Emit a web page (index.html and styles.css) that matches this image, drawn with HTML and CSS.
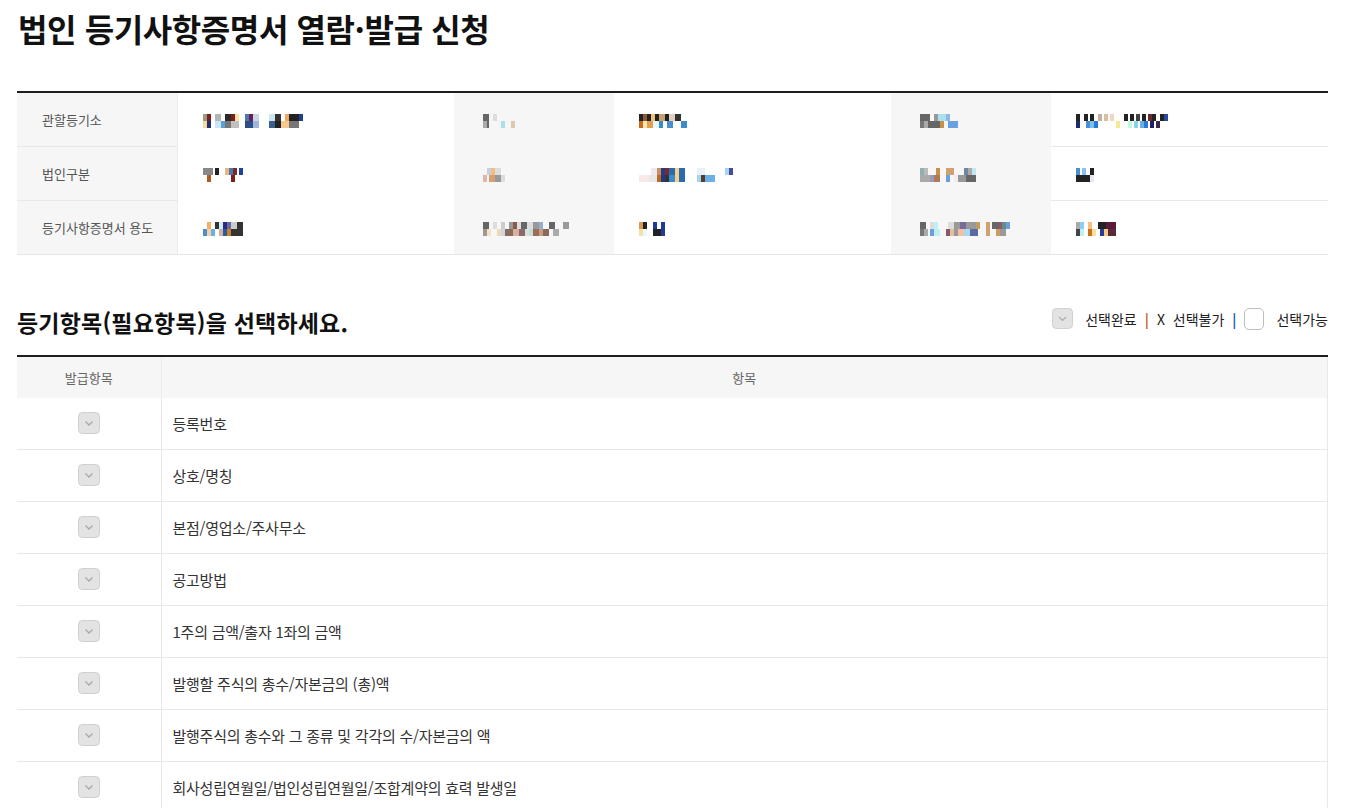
FILE: index.html
```html
<!DOCTYPE html>
<html lang="ko">
<head>
    <meta charset="UTF-8">
    <meta name="viewport" content="width=device-width, initial-scale=1.0">
    <title>법인 등기사항증명서 열람·발급 신청</title>
    <link rel="stylesheet" href="styles.css">
</head>
<body>
    <h1 class="page-title">법인 등기사항증명서 열람·발급 신청</h1>

    <table class="info">
        <colgroup>
            <col class="w-label"><col class="w-value">
            <col class="w-label"><col class="w-value">
            <col class="w-label"><col class="w-value">
        </colgroup>
        <tr>
            <th class="lined">관할등기소</th>
            <td><span class="mz mz-a1"></span></td>
            <th><span class="mz mz-b1"></span></th>
            <td><span class="mz mz-c1"></span></td>
            <th><span class="mz mz-d1"></span></th>
            <td class="lined"><span class="mz mz-e1"></span></td>
        </tr>
        <tr>
            <th class="lined">법인구분</th>
            <td><span class="mz mz-a2"></span></td>
            <th><span class="mz mz-b2"></span></th>
            <td><span class="mz mz-c2"></span></td>
            <th><span class="mz mz-d2"></span></th>
            <td class="lined"><span class="mz mz-e2"></span></td>
        </tr>
        <tr class="last">
            <th>등기사항증명서 용도</th>
            <td><span class="mz mz-a3"></span></td>
            <th><span class="mz mz-b3"></span></th>
            <td><span class="mz mz-c3"></span></td>
            <th><span class="mz mz-d3"></span></th>
            <td><span class="mz mz-e3"></span></td>
        </tr>
    </table>

    <div class="section-head">
        <h2>등기항목(필요항목)을 선택하세요.</h2>
        <div class="legend">
            <svg class="chk" width="21" height="21" viewBox="0 0 22 22"><rect x="0.5" y="0.5" width="21" height="21" rx="4" fill="#e3e3e3" stroke="#cfcfcf"/><polyline points="7.5,9.5 11,13 14.5,9.5" fill="none" stroke="#a8a8a8" stroke-width="1.3"/></svg>
            <span class="lg-text">선택완료</span>
            <span class="bar bar-done">|</span>
            <span class="lg-text">X&nbsp; 선택불가</span>
            <span class="bar bar-no">|</span>
            <span class="empty-box"></span>
            <span class="lg-text">선택가능</span>
        </div>
    </div>

    <table class="items">
        <colgroup><col class="w-check"><col></colgroup>
        <thead>
            <tr><th>발급항목</th><th>항목</th></tr>
        </thead>
        <tbody>
            <tr><td class="c"><svg class="chk" width="22" height="22" viewBox="0 0 22 22"><rect x="0.5" y="0.5" width="21" height="21" rx="4" fill="#e3e3e3" stroke="#cfcfcf"/><polyline points="7.5,9.5 11,13 14.5,9.5" fill="none" stroke="#a8a8a8" stroke-width="1.3"/></svg></td><td>등록번호</td></tr>
            <tr><td class="c"><svg class="chk" width="22" height="22" viewBox="0 0 22 22"><rect x="0.5" y="0.5" width="21" height="21" rx="4" fill="#e3e3e3" stroke="#cfcfcf"/><polyline points="7.5,9.5 11,13 14.5,9.5" fill="none" stroke="#a8a8a8" stroke-width="1.3"/></svg></td><td>상호/명칭</td></tr>
            <tr><td class="c"><svg class="chk" width="22" height="22" viewBox="0 0 22 22"><rect x="0.5" y="0.5" width="21" height="21" rx="4" fill="#e3e3e3" stroke="#cfcfcf"/><polyline points="7.5,9.5 11,13 14.5,9.5" fill="none" stroke="#a8a8a8" stroke-width="1.3"/></svg></td><td>본점/영업소/주사무소</td></tr>
            <tr><td class="c"><svg class="chk" width="22" height="22" viewBox="0 0 22 22"><rect x="0.5" y="0.5" width="21" height="21" rx="4" fill="#e3e3e3" stroke="#cfcfcf"/><polyline points="7.5,9.5 11,13 14.5,9.5" fill="none" stroke="#a8a8a8" stroke-width="1.3"/></svg></td><td>공고방법</td></tr>
            <tr><td class="c"><svg class="chk" width="22" height="22" viewBox="0 0 22 22"><rect x="0.5" y="0.5" width="21" height="21" rx="4" fill="#e3e3e3" stroke="#cfcfcf"/><polyline points="7.5,9.5 11,13 14.5,9.5" fill="none" stroke="#a8a8a8" stroke-width="1.3"/></svg></td><td>1주의 금액/출자 1좌의 금액</td></tr>
            <tr><td class="c"><svg class="chk" width="22" height="22" viewBox="0 0 22 22"><rect x="0.5" y="0.5" width="21" height="21" rx="4" fill="#e3e3e3" stroke="#cfcfcf"/><polyline points="7.5,9.5 11,13 14.5,9.5" fill="none" stroke="#a8a8a8" stroke-width="1.3"/></svg></td><td>발행할 주식의 총수/자본금의 (총)액</td></tr>
            <tr><td class="c"><svg class="chk" width="22" height="22" viewBox="0 0 22 22"><rect x="0.5" y="0.5" width="21" height="21" rx="4" fill="#e3e3e3" stroke="#cfcfcf"/><polyline points="7.5,9.5 11,13 14.5,9.5" fill="none" stroke="#a8a8a8" stroke-width="1.3"/></svg></td><td>발행주식의 총수와 그 종류 및 각각의 수/자본금의 액</td></tr>
            <tr><td class="c"><svg class="chk" width="22" height="22" viewBox="0 0 22 22"><rect x="0.5" y="0.5" width="21" height="21" rx="4" fill="#e3e3e3" stroke="#cfcfcf"/><polyline points="7.5,9.5 11,13 14.5,9.5" fill="none" stroke="#a8a8a8" stroke-width="1.3"/></svg></td><td>회사성립연월일/법인성립연월일/조합계약의 효력 발생일</td></tr>
        </tbody>
    </table>
</body>
</html>
```

FILE: styles.css
```css
*{
    margin: 0;
    padding: 0;
    box-sizing: border-box;
}
body{
    padding: 0 27px 0 17px;
    font-family: "Noto Sans CJK KR", "Noto Sans", sans-serif;
    color: #222;
    background-color: #fff;
}
.page-title{
    padding-top: 8px;
    padding-left: 1px;
    font-size: 32px;
    line-height: 40px;
    font-weight: 700;
    color: #111;
    letter-spacing: -0.4px;
}

/* info table */
.info{
    width: 100%;
    margin-top: 43px;
    border-collapse: collapse;
    border-top: 2px solid #1e1e1e;
    border-bottom: 1px solid #e6e6e6;
    table-layout: fixed;
}
.w-label{ width: 160px; }
.info th, .info td{
    height: 54px;
    padding: 0 10px 0 25px;
    text-align: left;
    vertical-align: middle;
    font-size: 13px;
    font-weight: 400;
    white-space: nowrap;
}
.info th{
    background-color: #f6f6f6;
    color: #555;
}
.info th:first-child{
    border-right: 1px solid #ececec;
}
.info td{
    background-color: #fff;
}
.info .lined{
    border-bottom: 1px solid #e8e8e8;
}
.info th:nth-child(3), .info th:nth-child(5){
    padding-left: 29px;
}

/* mosaic placeholders for masked values */
.mz{
    display: inline-block;
    height: 14px;
    vertical-align: middle;
    background-repeat: no-repeat;
    background-size: 100% 50%;
    background-position: top, bottom;
}
.mz-a1{ width: 130px;
    background-image:
        linear-gradient(90deg, #9a9a80 0 4px, #7a1e1e 4px 8px, #fff 8px 12px, #b5b5b5 12px 18px, #fff 18px 22px, #2a2a2a 22px 28px, #7a1e1e 28px 32px, #ffe4a0 32px 36px, #fff 36px 42px, #4a7ab0 42px 46px, #6b1f4a 46px 50px, #c9d6ea 50px 56px, #fff 56px 66px, #cde6ea 66px 72px, #333 72px 78px, #fff 78px 82px, #f3a860 82px 86px, #222 86px 96px, #1f3f8f 96px 100px, #fff 100px 130px),
        linear-gradient(90deg, #f8d89a 0 4px, #1f3070 4px 8px, #fff 8px 12px, #c8e6f5 12px 18px, #5aa0d0 18px 22px, #777 22px 28px, #c0c0c0 28px 36px, #fff 36px 42px, #2e4c86 42px 50px, #a0b4e0 50px 56px, #fff 56px 66px, #3a5e8e 66px 72px, #222 72px 78px, #f7c890 78px 86px, #777 86px 96px, #fff 96px 130px);
}
.mz-a2{ width: 50px;
    background-image:
        linear-gradient(90deg, #888 0 10px, #fff 10px 12px, #222 12px 16px, #fff 16px 22px, #e4b880 22px 26px, #4a78b0 26px 30px, #7a2a2a 30px 34px, #fff 34px 36px, #2040a0 36px 40px, #fff 40px 50px),
        linear-gradient(90deg, #fff 0 4px, #b05a20 4px 8px, #fff 8px 28px, #7a1e1e 28px 32px, #fff 32px 50px);
}
.mz-a3{ width: 60px;
    background-image:
        linear-gradient(90deg, #fff 0 4px, #f3b060 4px 8px, #fff 8px 12px, #333 12px 16px, #d0ecf5 16px 20px, #2a2a8a 20px 24px, #6a6a9a 24px 28px, #ccc 28px 34px, #333 34px 40px, #fff 40px 60px),
        linear-gradient(90deg, #4a90d0 0 4px, #f8d0a0 4px 8px, #6ab0e8 8px 12px, #fff 12px 16px, #d0b0a0 16px 20px, #2a5aa0 20px 24px, #c8802a 24px 28px, #333 28px 40px, #fff 40px 60px);
}
.mz-b1{ width: 46px;
    background-image:
        linear-gradient(90deg, #666 0 6px, #f6f6f6 6px 10px, #ddd 10px 14px, #f6f6f6 14px 46px),
        linear-gradient(90deg, #aaa 0 4px, #666 4px 6px, #f6f6f6 6px 18px, #a8e0f0 18px 22px, #f6f6f6 22px 28px, #e0c8b0 28px 32px, #f6f6f6 32px 46px);
}
.mz-b2{ width: 26px;
    background-image:
        linear-gradient(90deg, #f6f6f6 0 4px, #c8d0e0 4px 8px, #f0c080 8px 12px, #ddd 12px 18px, #f6f6f6 18px 26px),
        linear-gradient(90deg, #d8b8a8 0 4px, #f6f6f6 4px 6px, #d8a070 6px 12px, #999 12px 18px, #ddd 18px 22px, #f6f6f6 22px 26px);
}
.mz-b3{ width: 108px;
    background-image:
        linear-gradient(90deg, #666 0 6px, #f6f6f6 6px 10px, #ddd 10px 14px, #f6f6f6 14px 18px, #ccc 18px 22px, #f6f6f6 22px 26px, #999 26px 30px, #8a5a4a 30px 34px, #ddd 34px 38px, #666 38px 44px, #ddd 44px 50px, #999 50px 56px, #90b0d0 56px 60px, #f6f6f6 60px 66px, #666 66px 72px, #f6f6f6 72px 80px, #999 80px 86px, #f6f6f6 86px 108px),
        linear-gradient(90deg, #999 0 4px, #f8e0c0 4px 8px, #f6f6f6 8px 14px, #f0d8b0 14px 18px, #c8d8e8 18px 22px, #8a6a5a 22px 30px, #d8b0a0 30px 36px, #8a6a6a 36px 42px, #ddd 42px 46px, #c0e0d0 46px 50px, #a06a5a 50px 56px, #c0a080 56px 60px, #8a6a5a 60px 66px, #f6f6f6 66px 70px, #aaa 70px 76px, #f6f6f6 76px 108px);
}
.mz-c1{ width: 54px;
    background-image:
        linear-gradient(90deg, #222 0 4px, #8a5a3a 4px 8px, #222 8px 12px, #f0c080 12px 16px, #222 16px 20px, #c8a070 20px 26px, #222 26px 30px, #e0d0c0 30px 36px, #333 36px 42px, #fff 42px 54px),
        linear-gradient(90deg, #c86a20 0 4px, #f8e8b0 4px 8px, #e0a050 8px 14px, #e8f8ff 14px 20px, #3a8ad0 20px 24px, #fff 24px 28px, #4a90d0 28px 34px, #fff 34px 42px, #3a8ad0 42px 48px, #fff 48px 54px);
}
.mz-c2{ width: 106px;
    background-image:
        linear-gradient(90deg, #fff 0 12px, #f0e8f0 12px 18px, #c89060 18px 22px, #2a3a8a 22px 26px, #7a2a2a 26px 30px, #2a6ab0 30px 36px, #f8d080 36px 40px, #2a6ab0 40px 46px, #fff 46px 58px, #e8f0f8 58px 66px, #fff 66px 86px, #a0d8f0 86px 90px, #4a4a9a 90px 94px, #fff 94px 106px),
        linear-gradient(90deg, #f8e8e8 0 10px, #e8e8e8 10px 18px, #c06a20 18px 22px, #1f3a8a 22px 26px, #333 26px 30px, #3a8ad0 30px 36px, #f8d080 36px 40px, #2a6ab0 40px 46px, #fff 46px 58px, #a0d8f0 58px 62px, #5a3a2a 62px 66px, #6ab0e8 66px 76px, #fff 76px 106px);
}
.mz-c3{ width: 26px;
    background-image:
        linear-gradient(90deg, #d89a50 0 4px, #222 4px 8px, #fff 8px 14px, #1f3a9a 14px 18px, #fff 18px 22px, #1f3a9a 22px 26px),
        linear-gradient(90deg, #f8e0a0 0 4px, #e8f8ff 4px 8px, #fff 8px 14px, #222 14px 22px, #1f3a9a 22px 26px);
}
.mz-d1{ width: 46px;
    background-image:
        linear-gradient(90deg, #666 0 10px, #f6f6f6 10px 14px, #999 14px 18px, #a8e0f0 18px 26px, #90b8e0 26px 30px, #f6f6f6 30px 46px),
        linear-gradient(90deg, #777 0 4px, #aaa 4px 8px, #666 8px 20px, #c8904a 20px 24px, #f6f6f6 24px 28px, #6aa0e0 28px 38px, #f6f6f6 38px 46px);
}
.mz-d2{ width: 72px;
    background-image:
        linear-gradient(90deg, #90b0b0 0 4px, #bbb 4px 8px, #f6f6f6 8px 16px, #c89050 16px 20px, #f6f6f6 20px 26px, #d0a070 26px 34px, #f6f6f6 34px 44px, #6a88a0 44px 48px, #aaa 48px 52px, #c0e8f0 52px 56px, #f6f6f6 56px 72px),
        linear-gradient(90deg, #aaa 0 10px, #9a9aba 10px 14px, #b07a5a 14px 20px, #f6f6f6 20px 26px, #6aa0e0 26px 30px, #f6f6f6 30px 34px, #eee 34px 38px, #999 38px 46px, #666 46px 56px, #f6f6f6 56px 72px);
}
.mz-d3{ width: 114px;
    background-image:
        linear-gradient(90deg, #666 0 6px, #f6f6f6 6px 10px, #ddd 10px 14px, #c0f0f0 14px 18px, #f6f6f6 18px 28px, #ddd 28px 34px, #999 34px 40px, #7a6a9a 40px 46px, #999 46px 56px, #c89a60 56px 60px, #f6f6f6 60px 66px, #d0a070 66px 70px, #f6f6f6 70px 72px, #666 72px 78px, #8a5a6a 78px 82px, #6a8a8a 82px 86px, #6aa0e0 86px 90px, #f6f6f6 90px 114px),
        linear-gradient(90deg, #777 0 4px, #aaa 4px 8px, #f6f6f6 8px 10px, #6aa0e0 10px 14px, #c0f0f0 14px 20px, #f6f6f6 20px 26px, #8a5a6a 26px 30px, #e0c0a0 30px 34px, #999 34px 38px, #f0c0a0 38px 44px, #a8d8f0 44px 50px, #5a6aa0 50px 58px, #f6f6f6 58px 66px, #d0a070 66px 70px, #f6f6f6 70px 76px, #d09a60 76px 80px, #999 80px 86px, #f6f6f6 86px 114px);
}
.mz-e1{ width: 114px;
    background-image:
        linear-gradient(90deg, #222 0 4px, #fff 4px 8px, #222 8px 12px, #fff 12px 14px, #222 14px 18px, #fff 18px 22px, #c8b0a0 22px 26px, #fff 26px 28px, #d8c0a0 28px 32px, #fff 32px 34px, #f0d8c0 34px 38px, #fff 38px 48px, #222 48px 52px, #fff 52px 54px, #222 54px 58px, #fff 58px 60px, #444 60px 64px, #fff 64px 66px, #222 66px 70px, #fff 70px 72px, #6a2a2a 72px 76px, #222 76px 80px, #fff 80px 84px, #222 84px 88px, #2a4aa0 88px 92px, #fff 92px 114px),
        linear-gradient(90deg, #1f2a6a 0 4px, #fff 4px 10px, #4a90d0 10px 14px, #7ac0f0 14px 18px, #2a7ad0 18px 22px, #fff 22px 40px, #f8e890 40px 44px, #fff 44px 52px, #c0f8e0 52px 56px, #fff 56px 58px, #8ad0f0 58px 62px, #fff 62px 64px, #6ab0e8 64px 68px, #2a7ad0 68px 72px, #fff 72px 74px, #1f1f6a 74px 78px, #fff 78px 80px, #3a2a4a 80px 84px, #fff 84px 114px);
}
.mz-e2{ width: 26px;
    background-image:
        linear-gradient(90deg, #4a90d0 0 4px, #fff 4px 6px, #8ac0f0 6px 10px, #fff 10px 14px, #222 14px 18px, #fff 18px 26px),
        linear-gradient(90deg, #222 0 14px, #e8e8f0 14px 18px, #fff 18px 26px);
}
.mz-e3{ width: 54px;
    background-image:
        linear-gradient(90deg, #aaa 0 4px, #8ad0f0 4px 8px, #fff 8px 12px, #f8c080 12px 16px, #fff 16px 22px, #222 22px 30px, #5a1a3a 30px 40px, #fff 40px 54px),
        linear-gradient(90deg, #444 0 4px, #c0f0f0 4px 8px, #fff 8px 12px, #c8701a 12px 16px, #f8e0a0 16px 20px, #fff 20px 24px, #2a3a9a 24px 28px, #f8c880 28px 32px, #5a2a3a 32px 40px, #fff 40px 54px);
}

/* section header with legend */
.section-head{
    display: flex;
    justify-content: space-between;
    align-items: flex-start;
    margin-top: 47px;
    height: 42px;
}
.section-head h2{
    font-size: 23px;
    line-height: 40px;
    font-weight: 700;
    color: #111;
    letter-spacing: 0.2px;
}
.legend{
    display: flex;
    align-items: center;
    height: 28px;
    margin-top: 3px;
    font-size: 14px;
    color: #222;
}
.legend .chk{
    margin-right: 12px;
}
.lg-text{
    line-height: 28px;
}
.bar{
    margin: 0 8px;
    font-size: 14px;
    font-weight: 700;
}
.bar-done{ color: #c0661a; }
.bar-no{ color: #1f5ab4; margin-right: 8px; }
.empty-box{
    width: 20px;
    height: 22px;
    border: 1px solid #bdbdbd;
    border-radius: 5px;
    background-color: #fff;
    margin-right: 12px;
}

/* items table */
.items{
    width: 100%;
    margin-top: 11px;
    border-collapse: collapse;
    border-top: 2px solid #1e1e1e;
    border-right: 1px solid #e8e8e8;
    table-layout: fixed;
}
.w-check{ width: 144px; }
.items th{
    height: 42px;
    background-color: #f6f6f6;
    font-size: 13px;
    font-weight: 400;
    color: #666;
    text-align: center;
}
.items th:first-child{
    border-right: 1px solid #ececec;
}
.items td{
    height: 52px;
    padding-left: 11px;
    font-size: 15px;
    letter-spacing: -0.25px;
    color: #333;
    border-bottom: 1px solid #e8e8e8;
    vertical-align: middle;
}
.items td.c{
    padding: 0;
    text-align: center;
    border-right: 1px solid #e8e8e8;
}
.items .chk{
    display: inline-block;
    vertical-align: middle;
    margin-top: -4px;
}
```
